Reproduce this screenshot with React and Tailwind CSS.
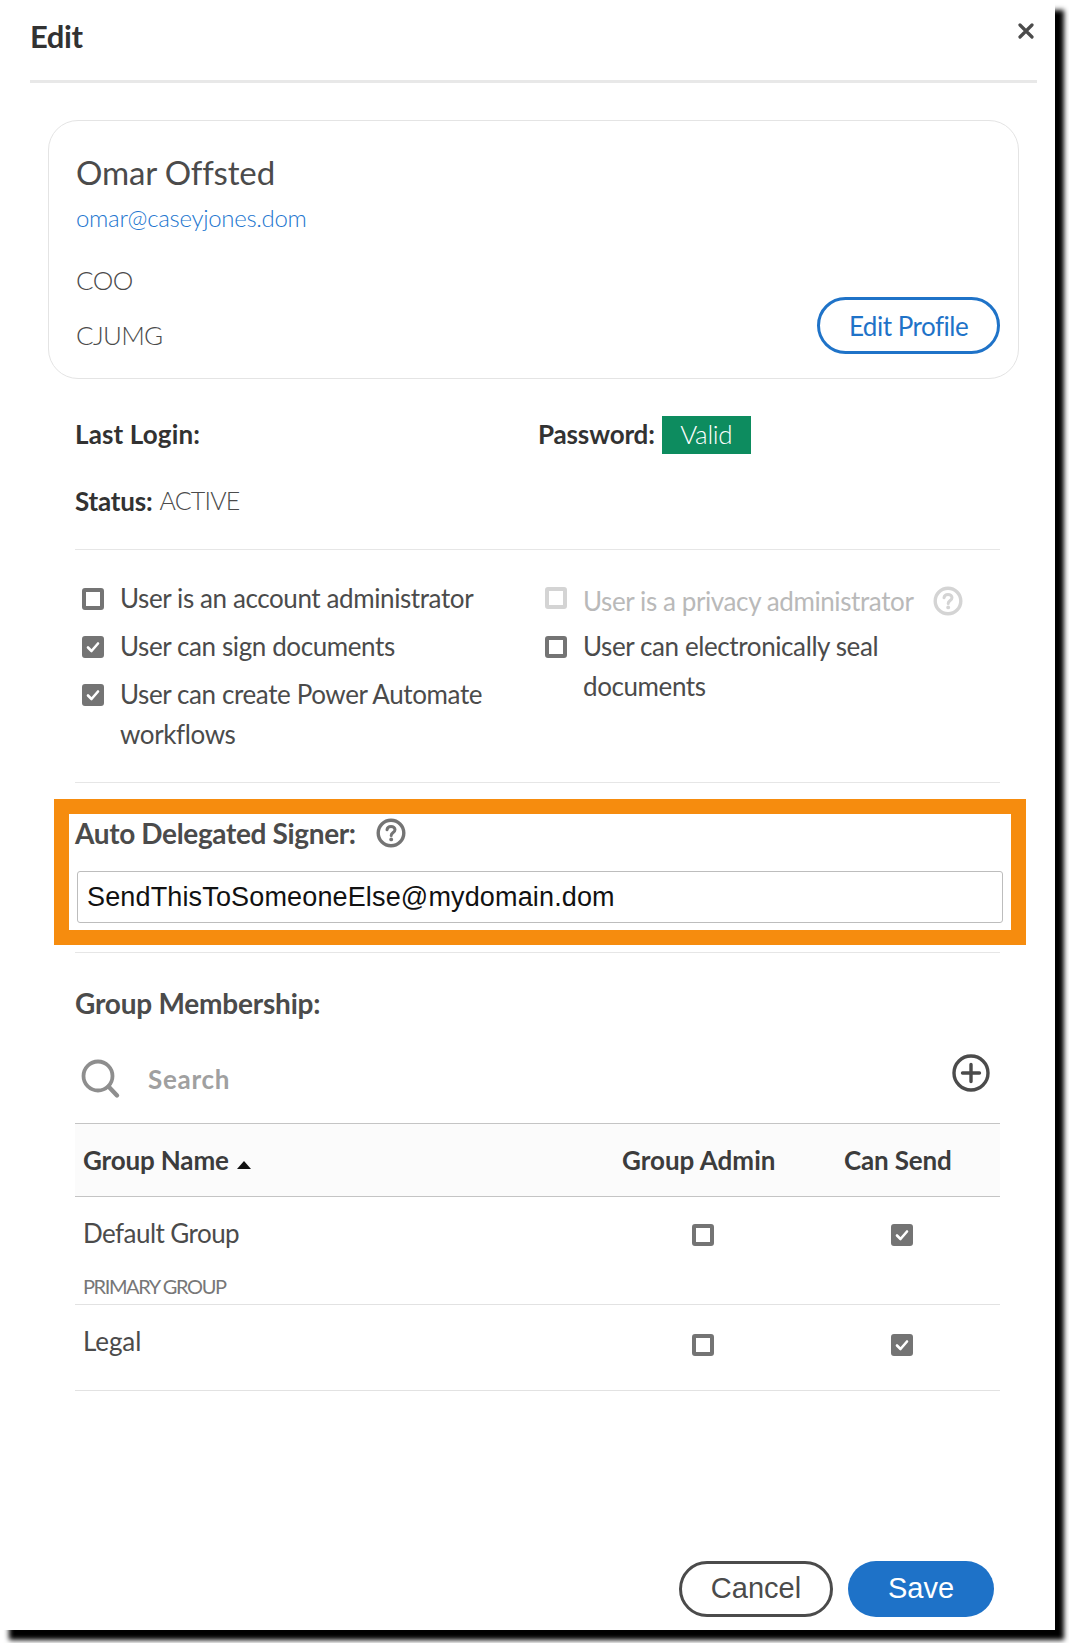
const F = '[font-family:Lato,"Open_Sans",sans-serif]';

function Box({ checked, disabled, className = "" }) {
  const c = disabled ? "border-[#d4d4d4]" : "border-[#747474]";
  return (
    <div className={`w-[22px] h-[22px] shrink-0 rounded-[3px] border-[4px] flex items-center justify-center ${c} ${checked ? "bg-[#747474]" : "bg-white"} ${className}`}>
      {checked && (
        <svg width="14" height="14" viewBox="0 0 14 14" fill="none" className="shrink-0">
          <path d="M2 7.5 L5.5 11 L12 3.5" stroke="#fff" strokeWidth="2.6" strokeLinecap="round" strokeLinejoin="round" />
        </svg>
      )}
    </div>
  );
}

function Help({ light, className = "" }) {
  const c = light ? "#d4d4d4" : "#747474";
  return (
    <svg width="30" height="30" viewBox="0 0 30 30" className={className} fill="none">
      <circle cx="15" cy="15" r="12.8" stroke={c} strokeWidth="3.4" />
      <path d="M11 11.8 C11.3 9.5 13 8.5 15 8.5 C17.4 8.5 19 10 19 11.8 C19 14.5 15.2 14.6 15.2 17.4" stroke={c} strokeWidth="3" strokeLinecap="round" />
      <circle cx="15.2" cy="21.4" r="1.9" fill={c} />
    </svg>
  );
}

function Hr({ className = "" }) {
  return <div className={`ml-[75px] w-[925px] h-px bg-[#e6e6e6] ${className}`} />;
}

const COLS = "grid grid-cols-[545px_223px_157px] w-[925px] ml-[75px]";

export default function App() {
  return (
    <div className={`w-[1069px] h-[1643px] bg-white overflow-hidden ${F}`}>
      <div className="w-[1055px] h-[1630px] bg-white flex flex-col shadow-[9px_10px_5px_#000] text-[#4b4b4b]">
        <div className="ml-[30px] w-[1007px] h-[83px] shrink-0 border-b-[3px] border-[#e8e8e8] flex justify-between items-start">
          <div className="mt-[16px] text-[31px] leading-[40px] font-bold text-[#323232] tracking-[-0.4px]">Edit</div>
          <svg width="16" height="16" viewBox="0 0 16 16" className="mt-[23px] mr-[3px]">
            <path d="M2 2 L14 14 M14 2 L2 14" stroke="#4b4b4b" strokeWidth="3.2" strokeLinecap="round" />
          </svg>
        </div>

        <div className="mt-[37px] ml-[48px] w-[971px] h-[259px] shrink-0 rounded-[30px] border border-[#e4e4e4] flex justify-between items-end">
          <div className="self-start pl-[27px] pt-[31px]">
            <div className="text-[33px] leading-[40px] tracking-[-0.15px]">Omar Offsted</div>
            <div className="mt-[11px] text-[24px] leading-[30px] font-light text-[#2376cf] tracking-[-0.3px]">omar@caseyjones.dom</div>
            <div className="mt-[32px] text-[26px] leading-[30px] font-light tracking-[-0.6px]">COO</div>
            <div className="mt-[25px] text-[26px] leading-[30px] font-light tracking-[-0.7px]">CJUMG</div>
          </div>
          <button className="mb-[24px] mr-[18px] w-[183px] h-[57px] rounded-full border-[3px] border-[#1f73c8] text-[#1f73c8] text-[26px] leading-none tracking-[-0.5px]">Edit Profile</button>
        </div>

        <div className="mt-[36px] ml-[75px] flex items-center h-[39px] shrink-0 text-[26px] text-[#323232]">
          <div className="w-[463px] font-bold tracking-[0.15px]">Last Login:</div>
          <div className="font-bold tracking-[-0.15px]">Password:</div>
          <div className="ml-[7px] w-[89px] h-[38px] bg-[#0d8c5f] text-white font-light flex items-center justify-center tracking-[-0.3px]">Valid</div>
        </div>
        <div className="mt-[27px] ml-[75px] h-[40px] shrink-0 flex items-center">
          <span className="font-bold text-[#323232] text-[26px] tracking-[-0.2px]">Status:</span>
          <span className="ml-[7px] font-light text-[25px] tracking-[-0.8px]">ACTIVE</span>
        </div>
        <Hr className="mt-[28px] shrink-0" />

        <div className="ml-[75px] w-[925px] h-[232px] shrink-0 pt-[28px] flex text-[26px] leading-[40px] tracking-[-0.4px]">
          <div className="w-[462px] flex flex-col gap-[8px]">
            <div className="flex gap-[16px] pl-[7px]"><Box className="mt-[10px]" /><span>User is an account administrator</span></div>
            <div className="flex gap-[16px] pl-[7px]"><Box checked className="mt-[10px]" /><span>User can sign documents</span></div>
            <div className="flex gap-[16px] pl-[7px]"><Box checked className="mt-[10px]" /><span>User can create Power Automate<br />workflows</span></div>
          </div>
          <div className="pl-[8px] pt-[3px] flex flex-col gap-[5px]">
            <div className="flex gap-[16px] text-[#b9b9b9]"><Box disabled className="mt-[6px]" /><span>User is a privacy administrator</span><Help light className="mt-[5px] ml-[4px]" /></div>
            <div className="flex gap-[16px]"><Box className="mt-[10px]" /><span>User can electronically seal<br />documents</span></div>
          </div>
        </div>
        <Hr className="shrink-0" />

        <div className="mt-[16px] ml-[54px] w-[972px] h-[146px] shrink-0 border-[15px] border-[#f68c0e] bg-white">
          <div className="pl-[6px] h-[38px] flex items-center gap-[20px]">
            <span className="text-[28px] font-bold tracking-[-0.35px]">Auto Delegated Signer:</span>
            <Help />
          </div>
          <div className="mt-[19px] ml-[8px] w-[926px] h-[52px] rounded-[3px] border border-[#bdbdbd] flex items-center pl-[9px] text-[27px] tracking-[0.15px] text-[#111] [font-family:'Liberation_Sans',sans-serif]">
            SendThisToSomeoneElse@mydomain.dom
          </div>
        </div>
        <Hr className="mt-[7px] shrink-0" />

        <div className="mt-[30px] ml-[75px] h-[40px] shrink-0 flex items-center text-[28px] font-bold tracking-[-0.2px]">Group Membership:</div>

        <div className="mt-[30px] ml-[75px] w-[925px] h-[50px] shrink-0 flex items-center">
          <svg width="40" height="40" viewBox="0 0 40 40" className="ml-[6px] mt-[1px]" fill="none">
            <circle cx="17" cy="17" r="14.5" stroke="#8e8e8e" strokeWidth="3.8" />
            <path d="M27.5 27.5 L36 36.5" stroke="#8e8e8e" strokeWidth="4.4" strokeLinecap="round" />
          </svg>
          <span className="ml-[27px] mt-[2px] text-[26px] font-bold text-[#a0a0a0] tracking-[0.7px]">Search</span>
          <svg width="38" height="38" viewBox="0 0 38 38" className="ml-auto mr-[10px] -mt-[10px]" fill="none">
            <circle cx="19" cy="19" r="17" stroke="#4b4b4b" strokeWidth="3.4" />
            <path d="M19 10.5 V27.5 M10.5 19 H27.5" stroke="#4b4b4b" strokeWidth="3.4" strokeLinecap="round" />
          </svg>
        </div>

        <div className={`${COLS} mt-[20px] h-[74px] shrink-0 items-center bg-[#fbfbfb] border-y border-[#c4c4c4] text-[26px] font-bold text-[#3c3c3c] tracking-[-0.15px]`}>
          <div className="pl-[8px] flex items-center">
            Group Name
            <svg width="14" height="8" viewBox="0 0 14 8" className="ml-[8px] mt-[9px]"><path d="M7 0 L14 8 H0 Z" fill="#111" /></svg>
          </div>
          <div className="pl-[2px] tracking-[0px]">Group Admin</div>
          <div className="pl-[1px]">Can Send</div>
        </div>

        <div className={`${COLS} h-[108px] shrink-0 border-b border-[#e2e2e2] text-[26px] tracking-[-0.55px]`}>
          <div className="pl-[8px] pt-[16px]">
            <div className="leading-[40px]">Default Group</div>
            <div className="mt-[18px] text-[20px] leading-[30px] font-normal text-[#777] tracking-[-1.4px]">PRIMARY GROUP</div>
          </div>
          <div className="pl-[72px] pt-[27px]"><Box /></div>
          <div className="pl-[48px] pt-[27px]"><Box checked /></div>
        </div>

        <div className={`${COLS} h-[86px] shrink-0 border-b border-[#e2e2e2] text-[26px] tracking-[-0.1px]`}>
          <div className="pl-[8px] pt-[16px] leading-[40px]">Legal</div>
          <div className="pl-[72px] pt-[29px]"><Box /></div>
          <div className="pl-[48px] pt-[29px]"><Box checked /></div>
        </div>

        <div className="mt-auto mb-[13px] mr-[61px] flex justify-end gap-[15px] text-[29px] [font-family:'Liberation_Sans',sans-serif]">
          <button className="w-[154px] h-[56px] rounded-full border-[3px] border-[#4b4b4b] text-[#4b4b4b]">Cancel</button>
          <button className="w-[146px] h-[56px] rounded-full bg-[#1e72c8] text-white font-medium">Save</button>
        </div>
      </div>
    </div>
  );
}
